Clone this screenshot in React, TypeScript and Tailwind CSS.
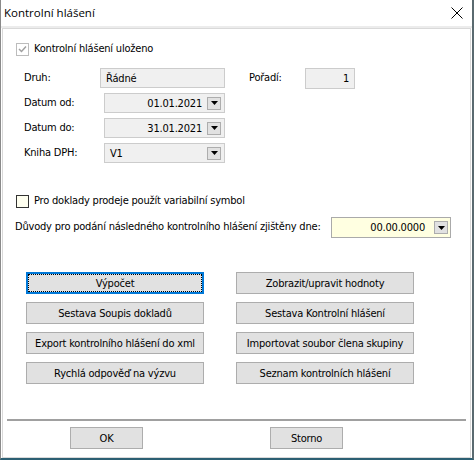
import React from "react";

const font = "font-['DejaVu_Sans_Condensed','Liberation_Sans',sans-serif] text-[11px] tracking-[-0.2px] text-black whitespace-nowrap";

function DropButton() {
  return (
    <div className="w-[14px] h-[13px] bg-[#e1e1e1] border border-[#adadad] flex items-center justify-center shrink-0">
      <svg width="7" height="4" viewBox="0 0 7 4">
        <polygon points="0,0 7,0 3.5,4" fill="#000" />
      </svg>
    </div>
  );
}

function Field({ value, align = "left", drop = false, className = "" }: { value: string; align?: "left" | "right"; drop?: boolean; className?: string }) {
  return (
    <div className={`h-[20px] border border-[#cccccc] bg-[#f0f0f0] flex items-center ${className}`}>
      <span className={`flex-1 px-[5px] leading-none ${align === "right" ? "text-right" : "text-left"}`}>{value}</span>
      {drop && <div className="mr-[3px]"><DropButton /></div>}
    </div>
  );
}

function Btn({ label, focused = false, className = "" }: { label: string; focused?: boolean; className?: string }) {
  return (
    <div
      className={`h-[22px] flex items-center justify-center leading-none ${
        focused ? "border-2 border-[#0078d7] bg-[#e1e1e1]" : "border border-[#adadad] bg-[#e1e1e1]"
      } ${className}`}
    >
      {focused ? (
        <div className="w-full h-full border border-dotted border-black flex items-center justify-center">{label}</div>
      ) : (
        label
      )}
    </div>
  );
}

const LEFT_BUTTONS = ["Výpočet", "Sestava Soupis dokladů", "Export kontrolního hlášení do xml", "Rychlá odpověď na výzvu"];
const RIGHT_BUTTONS = ["Zobrazit/upravit hodnoty", "Sestava Kontrolní hlášení", "Importovat soubor člena skupiny", "Seznam kontrolních hlášení"];

export default function App() {
  return (
    <div className={`w-[474px] h-[460px] bg-white border-l border-[#8a8a8a] border-r-2 border-r-[#5a6a70] border-b-2 border-b-[#2c5f73] flex flex-col ${font}`}>
      {/* Title bar */}
      <div className="h-[26px] flex items-center justify-between pl-[3px] pr-[9px] shrink-0">
        <span className="font-['Open_Sans',sans-serif] text-[11.5px] tracking-normal">Kontrolní hlášení</span>
        <svg width="12" height="12" viewBox="0 0 12 12">
          <path d="M0.5 0.5 L11.5 11.5 M11.5 0.5 L0.5 11.5" stroke="#000" strokeWidth="1" />
        </svg>
      </div>
      <div className="h-[2px] bg-[#ececec] shrink-0" />

      {/* Body */}
      <div className="flex-1 mx-[1px] border border-[#d9d9d9] flex flex-col">
        {/* Saved flag */}
        <div className="flex items-center mt-[13px] ml-[13px] h-[14px]">
          <div className="w-[13px] h-[13px] border border-[#bcbcbc] bg-white flex items-center justify-center">
            <svg width="9" height="8" viewBox="0 0 9 8">
              <path d="M1 4 L3.5 6.5 L8 1.5" stroke="#a0a0a0" strokeWidth="1.5" fill="none" />
            </svg>
          </div>
          <span className="ml-[5px]">Kontrolní hlášení uloženo</span>
        </div>

        {/* Form rows */}
        <div className="flex mt-[12px]">
          <div className="flex flex-col gap-[5px] ml-[21px]">
            <div className="flex items-center h-[20px]">
              <span className="w-[80px]">Druh:</span>
              <Field value="Řádné" className="w-[125px] -ml-[4px]" />
            </div>
            <div className="flex items-center h-[20px]">
              <span className="w-[80px]">Datum od:</span>
              <Field value="01.01.2021" align="right" drop className="w-[121px]" />
            </div>
            <div className="flex items-center h-[20px]">
              <span className="w-[80px]">Datum do:</span>
              <Field value="31.01.2021" align="right" drop className="w-[121px]" />
            </div>
            <div className="flex items-center h-[20px]">
              <span className="w-[80px]">Kniha DPH:</span>
              <Field value="V1" drop className="w-[121px]" />
            </div>
          </div>
          <div className="flex items-start ml-[24px]">
            <div className="flex items-center h-[21px]">
              <span className="w-[56px]">Pořadí:</span>
              <Field value="1" align="right" className="w-[50px] h-[21px]" />
            </div>
          </div>
        </div>

        {/* Variable symbol */}
        <div className="flex items-center mt-[32px] ml-[13px] h-[13px]">
          <div className="w-[13px] h-[13px] border border-[#333333] bg-[#fffff0]" />
          <span className="ml-[5px]">Pro doklady prodeje použít variabilní symbol</span>
        </div>

        {/* Reasons date */}
        <div className="flex items-center mt-[9px] ml-[12px] h-[21px]">
          <span className="w-[316px]">Důvody pro podání následného kontrolního hlášení zjištěny dne:</span>
          <div className="w-[120px] h-[21px] border border-[#aaaaaa] bg-[#ffffe1] flex items-center">
            <span className="flex-1 text-right pr-[9px] leading-none">00.00.0000</span>
            <div className="mr-[2px]"><DropButton /></div>
          </div>
        </div>

        {/* Action buttons */}
        <div className="grid grid-cols-[178px_178px] gap-x-[32px] gap-y-[8px] mt-[34px] ml-[23px]">
          {LEFT_BUTTONS.map((l, i) => (
            <React.Fragment key={l}>
              <Btn label={l} focused={i === 0} />
              <Btn label={RIGHT_BUTTONS[i]} />
            </React.Fragment>
          ))}
        </div>

        {/* Footer */}
        <div className="mt-[35px] mx-[4px] h-[2px] bg-[#a0a0a0]" />
        <div className="flex mt-[6px] ml-[67px] gap-[127px]">
          <Btn label="OK" className="w-[73px]" />
          <Btn label="Storno" className="w-[73px]" />
        </div>
      </div>
    </div>
  );
}
